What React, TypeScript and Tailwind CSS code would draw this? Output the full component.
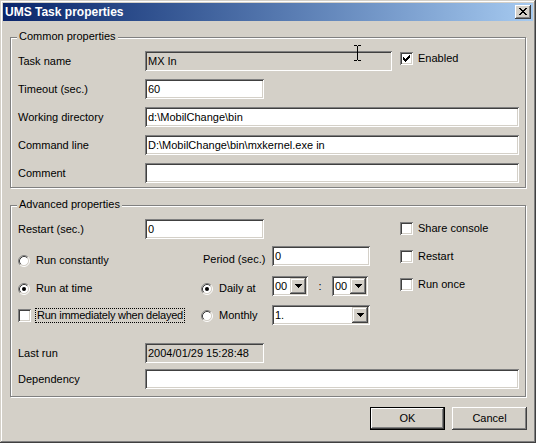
import React from "react";

// Win2k style bevels
const sunken =
  "shadow-[inset_1px_1px_0_#808080,inset_-1px_-1px_0_#ffffff,inset_2px_2px_0_#404040,inset_-2px_-2px_0_#d4d0c8]";
const raised =
  "shadow-[inset_-1px_-1px_0_#404040,inset_1px_1px_0_#ffffff,inset_-2px_-2px_0_#808080,inset_2px_2px_0_#d4d0c8]";
const scrollBtn =
  "shadow-[inset_-1px_-1px_0_#404040,inset_1px_1px_0_#d4d0c8,inset_-2px_-2px_0_#808080,inset_2px_2px_0_#ffffff]";

function Field({ w, value = "", readOnly = false }: { w: string; value?: string; readOnly?: boolean }) {
  return (
    <div
      className={`${w} h-[20px] shrink-0 ${sunken} ${
        readOnly ? "bg-[#d4d0c8]" : "bg-white"
      } flex items-center pl-[3px] whitespace-nowrap overflow-hidden`}
    >
      {value}
    </div>
  );
}

function Arrow() {
  return (
    <svg width="7" height="4" shapeRendering="crispEdges">
      <rect x="0" y="0" width="7" height="1" fill="#000" />
      <rect x="1" y="1" width="5" height="1" fill="#000" />
      <rect x="2" y="2" width="3" height="1" fill="#000" />
      <rect x="3" y="3" width="1" height="1" fill="#000" />
    </svg>
  );
}

function Combo({ w, value }: { w: string; value: string }) {
  return (
    <div className={`${w} h-[20px] shrink-0 ${sunken} bg-white flex items-center pl-[3px] pr-[2px]`}>
      <span className="flex-1">{value}</span>
      <div className={`w-[16px] h-[16px] ${scrollBtn} bg-[#d4d0c8] flex items-center justify-center`}>
        <Arrow />
      </div>
    </div>
  );
}

function RadioDot({ checked }: { checked?: boolean }) {
  return (
    <svg width="12" height="12" viewBox="0 0 12 12" className="shrink-0">
      <circle cx="6" cy="6" r="4.5" fill="#fff" />
      <path d="M2.11 9.89 A5.5 5.5 0 0 1 9.89 2.11" stroke="#808080" fill="none" />
      <path d="M9.89 2.11 A5.5 5.5 0 0 1 2.11 9.89" stroke="#ffffff" fill="none" />
      <path d="M2.82 9.18 A4.5 4.5 0 0 1 9.18 2.82" stroke="#404040" fill="none" />
      <path d="M9.18 2.82 A4.5 4.5 0 0 1 2.82 9.18" stroke="#d4d0c8" fill="none" />
      {checked && <circle cx="6" cy="6" r="2" fill="#000" />}
    </svg>
  );
}

function Radio({ label, checked, className = "" }: { label: string; checked?: boolean; className?: string }) {
  return (
    <div className={`flex items-center h-[13px] shrink-0 ${className}`}>
      <RadioDot checked={checked} />
      <span className="ml-[6px]">{label}</span>
    </div>
  );
}

function CheckBox({ checked }: { checked?: boolean }) {
  return (
    <div className={`w-[13px] h-[13px] shrink-0 bg-white ${sunken} relative`}>
      {checked && (
        <svg width="13" height="13" className="absolute left-0 top-0" shapeRendering="crispEdges">
          <rect x="9" y="3" width="1" height="1" fill="#000" />
          <rect x="8" y="4" width="2" height="1" fill="#000" />
          <rect x="3" y="5" width="1" height="1" fill="#000" />
          <rect x="7" y="5" width="3" height="1" fill="#000" />
          <rect x="3" y="6" width="2" height="1" fill="#000" />
          <rect x="6" y="6" width="3" height="1" fill="#000" />
          <rect x="3" y="7" width="5" height="1" fill="#000" />
          <rect x="4" y="8" width="3" height="1" fill="#000" />
          <rect x="5" y="9" width="1" height="1" fill="#000" />
        </svg>
      )}
    </div>
  );
}

function Check({ label, checked, className = "" }: { label: string; checked?: boolean; className?: string }) {
  return (
    <div className={`flex items-center h-[13px] shrink-0 ${className}`}>
      <CheckBox checked={checked} />
      <span className="ml-[5px]">{label}</span>
    </div>
  );
}

function Legend({ children }: { children: React.ReactNode }) {
  return (
    <span className="absolute left-[6px] -top-[8px] bg-[#d4d0c8] px-[2px] leading-[13px]">{children}</span>
  );
}

function Label({ children }: { children: React.ReactNode }) {
  return <span className="w-[127px] shrink-0">{children}</span>;
}

function Row({ label, children, className = "" }: { label: string; children: React.ReactNode; className?: string }) {
  return (
    <div className={`flex items-center h-[20px] ${className}`}>
      <Label>{label}</Label>
      {children}
    </div>
  );
}

const groupBox =
  "relative w-[516px] border border-[#808080] shadow-[inset_1px_1px_0_#ffffff,1px_1px_0_#ffffff] pl-[7px] pt-[13px]";

export default function App() {
  return (
    <div
      className="relative w-[536px] h-[443px] p-[3px] bg-[#d4d0c8] text-black text-[11px] leading-[13px] font-['Liberation_Sans',Arial,sans-serif] shadow-[inset_-1px_-1px_0_#404040,inset_1px_1px_0_#d4d0c8,inset_-2px_-2px_0_#808080,inset_2px_2px_0_#ffffff]"
    >
      {/* Title bar */}
      <div className="h-[18px] bg-linear-to-r from-[#0a246a] to-[#a6caf0] flex items-center justify-between pl-[2px] pr-[2px]">
        <span className="text-white font-bold text-[12px]">UMS Task properties</span>
        <div className={`w-[16px] h-[14px] bg-[#d4d0c8] ${raised} pl-[4px] pt-[3px]`}>
          <svg width="8" height="7" shapeRendering="crispEdges" className="block">
            <rect x="0" y="0" width="2" height="1" fill="#000" />
            <rect x="6" y="0" width="2" height="1" fill="#000" />
            <rect x="1" y="1" width="2" height="1" fill="#000" />
            <rect x="5" y="1" width="2" height="1" fill="#000" />
            <rect x="2" y="2" width="4" height="1" fill="#000" />
            <rect x="3" y="3" width="2" height="1" fill="#000" />
            <rect x="2" y="4" width="4" height="1" fill="#000" />
            <rect x="1" y="5" width="2" height="1" fill="#000" />
            <rect x="5" y="5" width="2" height="1" fill="#000" />
            <rect x="0" y="6" width="2" height="1" fill="#000" />
            <rect x="6" y="6" width="2" height="1" fill="#000" />
          </svg>
        </div>
      </div>

      <div className="flex flex-col pl-[7px]">
        {/* Common properties */}
        <div className={`${groupBox} mt-[16px] h-[151px]`}>
          <Legend>Common properties</Legend>
          <div className="flex flex-col gap-[8px]">
            <div className="flex items-start h-[20px]">
              <span className="w-[127px] shrink-0 self-center">Task name</span>
              <Field w="w-[247px]" value="MX In" readOnly />
              <Check label="Enabled" checked className="ml-[8px] mt-[1px]" />
            </div>
            <Row label="Timeout (sec.)">
              <Field w="w-[119px]" value="60" />
            </Row>
            <Row label="Working directory">
              <Field w="w-[374px]" value="d:\MobilChange\bin" />
            </Row>
            <Row label="Command line">
              <Field w="w-[374px]" value="D:\MobilChange\bin\mxkernel.exe in" />
            </Row>
            <Row label="Comment">
              <Field w="w-[374px]" />
            </Row>
          </div>
        </div>

        {/* Advanced properties */}
        <div className={`${groupBox} mt-[17px] h-[192px]`}>
          <Legend>Advanced properties</Legend>
          <div className="flex">
            <div className="w-[382px] shrink-0 flex flex-col">
              <Row label="Restart (sec.)">
                <Field w="w-[119px]" value="0" />
              </Row>
              <div className="flex items-start h-[20px] mt-[7px]">
                <Radio label="Run constantly" className="w-[185px] mt-[8px]" />
                <span className="w-[69px] shrink-0 mt-[7px]">Period (sec.)</span>
                <Field w="w-[98px]" value="0" />
              </div>
              <div className="flex items-start h-[20px] mt-[10px]">
                <Radio label="Run at time" checked className="w-[183px] mt-[6px]" />
                <Radio label="Daily at" checked className="w-[71px] mt-[6px]" />
                <Combo w="w-[36px]" value="00" />
                <span className="w-[24px] shrink-0 text-center self-center">:</span>
                <Combo w="w-[36px]" value="00" />
              </div>
              <div className="flex items-start h-[20px] mt-[9px]">
                <div className="w-[183px] shrink-0 flex items-center h-[16px] mt-[2px]">
                  <CheckBox />
                  <span className="ml-[4px] border border-dotted border-black px-[1px] leading-[13px] tracking-[-0.25px]">
                    Run immediately when delayed
                  </span>
                </div>
                <Radio label="Monthly" className="w-[71px] mt-[4px]" />
                <Combo w="w-[98px]" value="1." />
              </div>
            </div>
            <div className="flex flex-col gap-[15px] pt-[3px]">
              <Check label="Share console" />
              <Check label="Restart" />
              <Check label="Run once" />
            </div>
          </div>
          <Row label="Last run" className="mt-[18px]">
            <Field w="w-[119px]" value="2004/01/29 15:28:48" readOnly />
          </Row>
          <Row label="Dependency" className="mt-[6px]">
            <Field w="w-[374px]" />
          </Row>
        </div>

        {/* Buttons */}
        <div className="flex justify-end gap-[7px] w-[517px] mt-[10px]">
          <div className="w-[75px] h-[23px] border border-black">
            <div className={`w-full h-full ${raised} flex items-center justify-center`}>OK</div>
          </div>
          <div className={`w-[75px] h-[23px] ${raised} flex items-center justify-center`}>Cancel</div>
        </div>
      </div>

      {/* I-beam mouse cursor */}
      <svg width="7" height="16" shapeRendering="crispEdges" className="absolute left-[354px] top-[45px]">
        <rect x="0" y="0" width="3" height="1" fill="#000" />
        <rect x="4" y="0" width="3" height="1" fill="#000" />
        <rect x="3" y="1" width="1" height="14" fill="#000" />
        <rect x="0" y="15" width="3" height="1" fill="#000" />
        <rect x="4" y="15" width="3" height="1" fill="#000" />
      </svg>
    </div>
  );
}
